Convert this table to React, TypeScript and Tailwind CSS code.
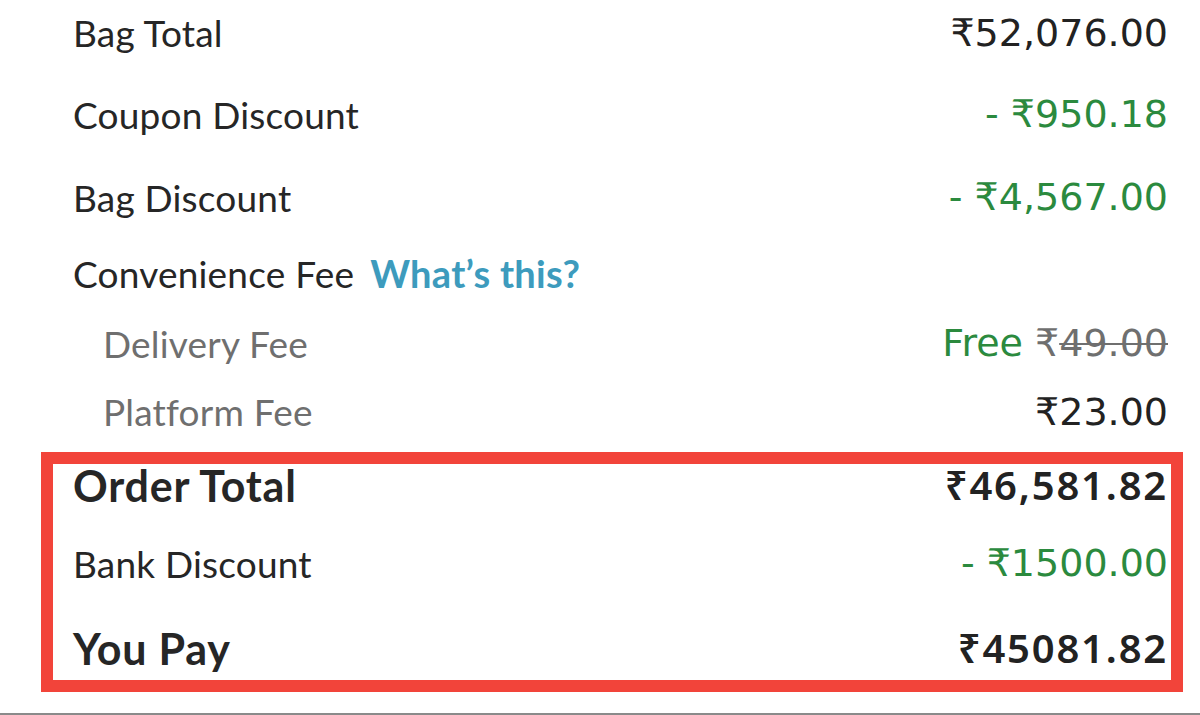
import React from 'react';

const label = "font-['Lato','Noto_Sans',sans-serif]";
const amount = "font-['DejaVu_Sans','Roboto',sans-serif]";
const amountBold = "font-['Noto_Sans','Roboto',sans-serif]";

type Row = {
  name: string;
  value: React.ReactNode;
  h: string;
  sub?: boolean;
  bold?: boolean;
  green?: boolean;
  extra?: React.ReactNode;
};

const Line: React.FC<{ row: Row }> = ({ row }) => (
  <div className={`flex items-center justify-between ${row.h}`}>
    <div className={`flex items-center gap-[16px] ${row.sub ? 'pl-[30px]' : ''}`}>
      <span
        className={`${label} leading-none ${
          row.sub ? 'text-[#6f6f6f]' : 'text-[#262626]'
        } ${row.bold ? 'font-bold text-[43px] tracking-[0.8px]' : 'font-normal text-[37px] tracking-[0.2px]'}`}
      >
        {row.name}
      </span>
      {row.extra}
    </div>
    <span
      className={`leading-none ${
        row.green ? 'text-[#2b8a3e]' : 'text-[#222222]'
      } ${
        row.bold
          ? `${amountBold} font-semibold text-[40px] tracking-[1.8px]`
          : `${amount} font-normal text-[38px]`
      }`}
    >
      {row.value}
    </span>
  </div>
);

export default function App() {
  const top: Row[] = [
    { name: 'Bag Total', value: '₹52,076.00', h: 'h-[65px]' },
    { name: 'Coupon Discount', value: '- ₹950.18', h: 'h-[98px]', green: true },
    { name: 'Bag Discount', value: '- ₹4,567.00', h: 'h-[68px]', green: true },
    {
      name: 'Convenience Fee',
      value: '',
      h: 'h-[84px]',
      extra: (
        <span className={`${label} text-[38px] leading-none font-bold text-[#3d9bbd] tracking-[0.3px]`}>
          What’s this?
        </span>
      ),
    },
    {
      name: 'Delivery Fee',
      value: (
        <>
          <span className="text-[#2b8a3e]">Free </span>
          <span className="text-[#6f6f6f]">
            ₹<span className="line-through decoration-[2px]">49.00</span>
          </span>
        </>
      ),
      h: 'h-[56px]',
      sub: true,
    },
    { name: 'Platform Fee', value: '₹23.00', h: 'h-[81px]', sub: true },
  ];

  const boxed: Row[] = [
    { name: 'Order Total', value: '₹46,581.82', h: 'h-[42px]', bold: true },
    { name: 'Bank Discount', value: '- ₹1500.00', h: 'h-[114px]', green: true },
    { name: 'You Pay', value: '₹45081.82', h: 'h-[56px]', bold: true },
  ];

  return (
    <div className="w-[1200px] h-[715px] bg-white overflow-hidden flex flex-col">
      <div className="pl-[73px] pr-[32px]">
        {top.map((r) => (
          <Line key={r.name} row={r} />
        ))}
        <div className="-ml-[32px] -mr-[15px] border-[12px] border-[#f2443a] pl-[20px] pr-[3px] pb-[4px]">
          {boxed.map((r) => (
            <Line key={r.name} row={r} />
          ))}
        </div>
      </div>
      <div className="mt-auto h-[2px] bg-[#8a8a8a]" />
    </div>
  );
}
